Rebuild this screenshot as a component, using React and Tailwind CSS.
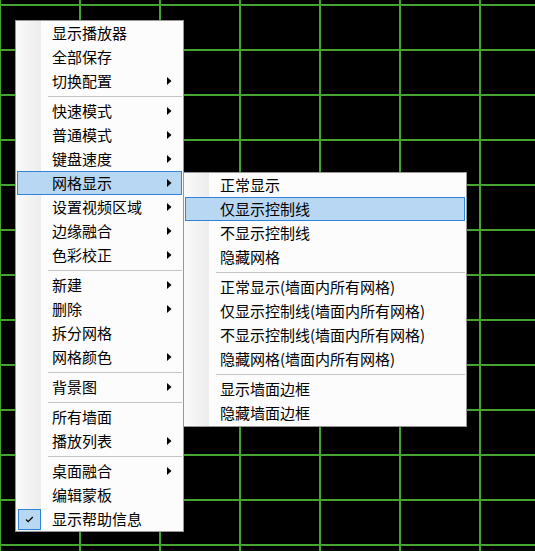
import React from "react";

const FONT = { fontFamily: '"Noto Sans CJK SC", "Noto Sans", sans-serif' };

const mainItems = [
  { t: "显示播放器" },
  { t: "全部保存" },
  { t: "切换配置", a: true },
  { sep: true },
  { t: "快速模式", a: true },
  { t: "普通模式", a: true },
  { t: "键盘速度", a: true },
  { t: "网格显示", a: true, hi: true },
  { t: "设置视频区域", a: true },
  { t: "边缘融合", a: true },
  { t: "色彩校正", a: true },
  { sep: true },
  { t: "新建", a: true },
  { t: "删除", a: true },
  { t: "拆分网格" },
  { t: "网格颜色", a: true },
  { sep: true },
  { t: "背景图", a: true },
  { sep: true },
  { t: "所有墙面" },
  { t: "播放列表", a: true },
  { sep: true },
  { t: "桌面融合", a: true },
  { t: "编辑蒙板" },
  { t: "显示帮助信息", check: true },
];

const subItems = [
  { t: "正常显示" },
  { t: "仅显示控制线", hi: true },
  { t: "不显示控制线" },
  { t: "隐藏网格" },
  { sep: true },
  { t: "正常显示(墙面内所有网格)" },
  { t: "仅显示控制线(墙面内所有网格)" },
  { t: "不显示控制线(墙面内所有网格)" },
  { t: "隐藏网格(墙面内所有网格)" },
  { sep: true },
  { t: "显示墙面边框" },
  { t: "隐藏墙面边框" },
];

function Arrow() {
  return (
    <svg width="5" height="8" viewBox="0 0 5 8" className="absolute right-[10px] top-[8px]">
      <polygon points="0,0 4.5,4 0,8" fill="#000" />
    </svg>
  );
}

function Row({ item }) {
  if (item.sep) {
    return (
      <div className="h-[6px] flex items-center pl-[31px]">
        <div className="h-px w-full bg-[#c4c4c4]" />
      </div>
    );
  }
  return (
    <div
      className={
        "relative h-[24px] flex items-center pl-[35px] text-[15px] leading-none text-black " +
        (item.hi ? "bg-[#b8d7f3] outline outline-1 -outline-offset-1 outline-[#2f84d5]" : "")
      }
    >
      {item.check && (
        <div className="absolute left-[1px] top-[2px] w-[23px] h-[21px] bg-[#b8d7f3] border border-[#2f84d5] flex items-center justify-center">
          <svg width="9" height="7" viewBox="0 0 9 7">
            <polyline points="1,3.5 3.2,5.6 7.8,1" fill="none" stroke="#000" strokeWidth="1.3" />
          </svg>
        </div>
      )}
      <span className="relative -top-px">{item.t}</span>
      {item.a && <Arrow />}
    </div>
  );
}

function Menu({ items, className }) {
  return (
    <div className={"absolute border border-[#979797] bg-[#fcfcfc] px-px " + className} style={FONT}>
      <div className="absolute left-0 top-0 bottom-0 w-[25px] bg-gradient-to-r from-[#fafafa] to-[#ececec]" />
      <div className="relative flex flex-col">
        {items.map((it, i) => (
          <Row key={i} item={it} />
        ))}
      </div>
    </div>
  );
}

function Grid() {
  const xs = [0, 80, 160, 240, 320, 400, 480];
  const ys = [5, 50, 95, 140, 185, 230, 275, 320, 365, 410, 455, 500, 545];
  return (
    <svg width="535" height="551" className="absolute inset-0">
      <rect width="535" height="551" fill="#000" />
      {ys.map((y) => (
        <rect key={"h" + y} x="0" y={y - 1} width="535" height="2" fill="#44a631" />
      ))}
      {xs.map((x) => (
        <rect key={"v" + x} x={x - 1} y="0" width="2" height="551" fill="#44a631" />
      ))}
    </svg>
  );
}

export default function App() {
  return (
    <div className="relative w-[535px] h-[551px] overflow-hidden bg-black">
      <Grid />
      <Menu items={mainItems} className="left-[15px] top-[20px] w-[169px]" />
      <Menu items={subItems} className="left-[183px] top-[172px] w-[284px] pb-px" />
    </div>
  );
}
